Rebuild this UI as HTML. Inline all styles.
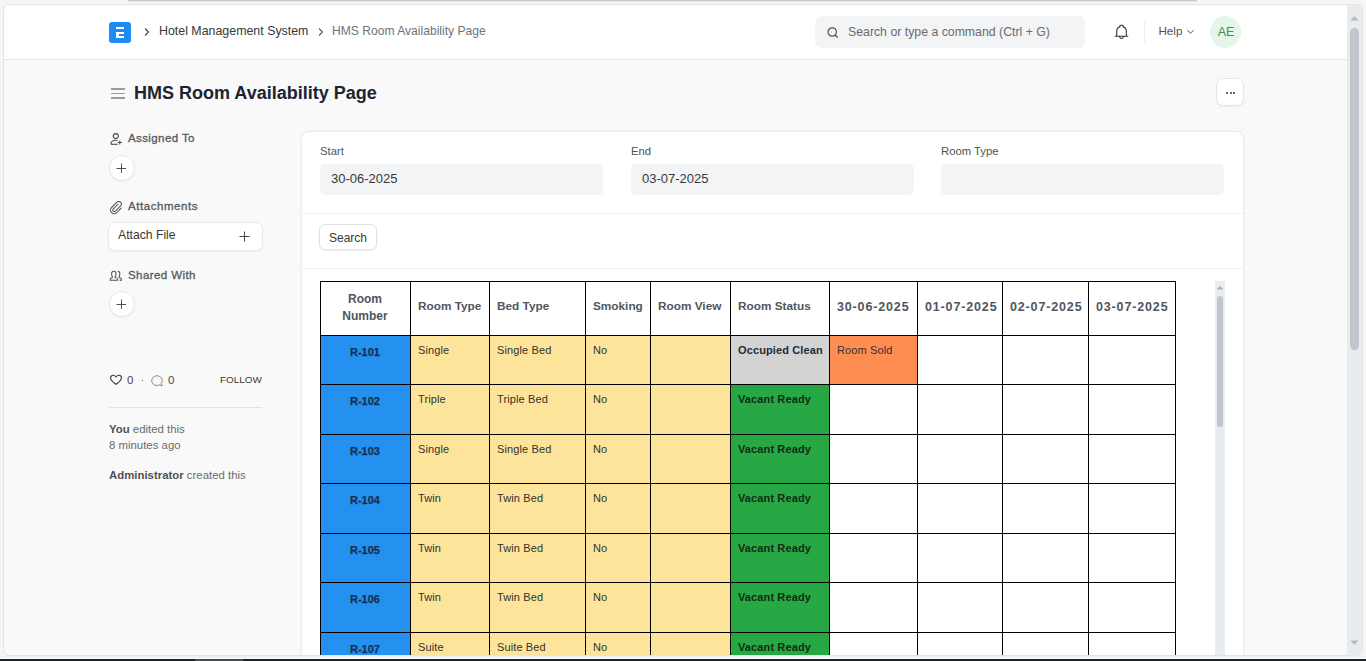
<!DOCTYPE html>
<html><head><meta charset="utf-8">
<style>
*{box-sizing:border-box;margin:0;padding:0}
html,body{width:1366px;height:661px;overflow:hidden;background:#f5f5f5;font-family:"Liberation Sans",sans-serif;color:#383838}
.abs{position:absolute}
#frame{position:absolute;left:3px;top:4px;width:1360px;height:652px;border:1px solid #e4e4e4;border-radius:6px;background:#f9f9f9;overflow:hidden}
#topstrip{position:absolute;left:128px;top:0;width:1069px;height:1px;background:#c8c8c8;box-shadow:0 1px 0 #e6e6e6}
#bottomdark{position:absolute;left:0;top:659px;width:1366px;height:2px;background:#1c2226}
#bottomdark2{position:absolute;left:195px;top:659px;width:48px;height:2px;background:#44494c}
#nav{position:absolute;left:0;top:0;width:1343px;height:55px;background:#fff;border-bottom:1px solid #e3e3e3}
.t{position:absolute;white-space:nowrap;line-height:1}
.c{position:absolute;overflow:hidden}
.vl{position:absolute;width:1px;background:#000}
.hl{position:absolute;height:1px;background:#000}
.hd{position:absolute;left:0;right:0;top:0;bottom:0;display:flex;align-items:center;padding-left:8px;padding-bottom:3px;font-weight:700;font-size:11.8px;color:#4f5660;line-height:17px}
.hc{justify-content:center;text-align:center;padding-left:0;padding-bottom:0;font-size:12px}
.hdate{font-size:12.5px;letter-spacing:0.85px;padding-left:8px;padding-bottom:2px}
.td{position:absolute;left:8px;top:10px;font-size:11px;color:#33322c;line-height:1;white-space:nowrap;letter-spacing:0.12px}
.td.b{font-weight:700}
.occ{color:#1f2a3c}
.vac{color:#0d2e14}
.rn{position:absolute;left:0;right:0;top:12px;text-align:center;font-size:11px;font-weight:700;color:#17304f;line-height:1;-webkit-text-stroke:0.25px #17304f}
</style></head><body>
<div id="topstrip"></div>
<div id="frame">
  <div id="nav"></div>
</div>
<div class="abs" style="left:0;top:656px;width:1366px;height:2px;background:#eff1f1"></div><div class="abs" style="left:0;top:658px;width:1366px;height:1px;background:#fdfdfd"></div><div id="bottomdark"></div><div id="bottomdark2"></div>
<div id="page" style="position:absolute;left:0;top:0;width:1366px;height:655px;overflow:hidden">
  <!-- card -->
  <div class="abs" style="left:301px;top:131px;width:943px;height:600px;background:#fff;border:1px solid #ececec;border-radius:8px;box-shadow:0 0 2.5px rgba(0,0,0,0.05)"></div>
  <div class="abs" style="left:302px;top:213px;width:941px;height:1px;background:#f0f0f0"></div>
  <div class="abs" style="left:302px;top:268px;width:941px;height:1px;background:#f0f0f0"></div>
  <!-- inner scrollbar -->
  <div class="abs" style="left:1215px;top:281px;width:10px;height:380px;background:#e9ecef"></div>
  <div class="abs" style="left:1217px;top:296px;width:6px;height:131px;background:#c1c6cc;border-radius:3px"></div>
  <svg class="abs" style="left:1216px;top:285px" width="8" height="5" viewBox="0 0 8 5"><path d="M0.5 4.5 L4 1 L7.5 4.5 Z" fill="#a8adb3"/></svg>
  <!-- main scrollbar -->
  <div class="abs" style="left:1347px;top:5px;width:15px;height:650px;background:#e9ecef;border-radius:0 5px 5px 0"></div>
  <div class="abs" style="left:1350px;top:28px;width:9px;height:322px;background:#c1c6cc;border-radius:4.5px"></div>
  <svg class="abs" style="left:1350px;top:15px" width="9" height="6" viewBox="0 0 9 6"><path d="M0.5 5.5 L4.5 1 L8.5 5.5 Z" fill="#b4b9be"/></svg>
  <svg class="abs" style="left:1350px;top:640px" width="9" height="6" viewBox="0 0 9 6"><path d="M0.5 0.5 L4.5 5 L8.5 0.5 Z" fill="#b4b9be"/></svg>
  <!-- logo -->
  <div class="abs" style="left:109px;top:22px;width:22px;height:21px;background:#1e8bf5;border-radius:3px"></div>
  <div class="abs" style="left:116px;top:27px;width:8px;height:2px;background:#fff"></div>
  <div class="abs" style="left:116px;top:32px;width:8px;height:6px;border:2px solid #fff;border-right:none;border-left-width:3px"></div>
  <!-- breadcrumb -->
  <svg class="abs" style="left:143px;top:27px" width="8" height="10" viewBox="0 0 8 10"><path d="M2 1.5 L5.5 5 L2 8.5" fill="none" stroke="#454545" stroke-width="1.1"/></svg>
  <div class="t" style="left:159px;top:25px;font-size:12.4px;color:#383838">Hotel Management System</div>
  <svg class="abs" style="left:317px;top:27px" width="8" height="10" viewBox="0 0 8 10"><path d="M2 1.5 L5.5 5 L2 8.5" fill="none" stroke="#5a5a5a" stroke-width="1.1"/></svg>
  <div class="t" style="left:332px;top:25px;font-size:12.1px;color:#6e7378">HMS Room Availability Page</div>
  <!-- search -->
  <div class="abs" style="left:815px;top:16px;width:270px;height:32px;background:#f3f4f6;border-radius:7px"></div>
  <svg class="abs" style="left:827px;top:27px" width="12" height="11" viewBox="0 0 12 11"><circle cx="5.2" cy="5" r="4.2" fill="none" stroke="#525252" stroke-width="1.2"/><path d="M8.2 8.2 L10.8 10.6" stroke="#525252" stroke-width="1.3"/></svg>
  <div class="t" style="left:848px;top:26px;font-size:12.3px;color:#6b6b6b">Search or type a command (Ctrl + G)</div>
  <!-- bell -->
  <svg class="abs" style="left:1112.5px;top:24px" width="17" height="16" viewBox="0 0 17 16"><path d="M2.2 12.2 L14.8 12.2 M3.7 12.2 L3.7 7.3 C3.7 5 5 3.4 6.9 2.9 L6.9 1.9 C6.9 1.5 7.2 1.2 7.6 1.2 L9.4 1.2 C9.8 1.2 10.1 1.5 10.1 1.9 L10.1 2.9 C12 3.4 13.3 5 13.3 7.3 L13.3 12.2 M6.7 12.8 C6.9 13.9 7.6 14.5 8.5 14.5 C9.4 14.5 10.1 13.9 10.3 12.8" fill="none" stroke="#333" stroke-width="1.1" stroke-linejoin="round" stroke-linecap="round"/></svg>
  <div class="abs" style="left:1144px;top:21px;width:1px;height:22px;background:#ececec"></div>
  <div class="t" style="left:1158.5px;top:25.3px;font-size:11.6px;color:#505050">Help</div>
  <svg class="abs" style="left:1186px;top:29px" width="9" height="6" viewBox="0 0 9 6"><path d="M1.4 1.3 L4.5 4.2 L7.6 1.3" fill="none" stroke="#444" stroke-width="0.95"/></svg>
  <div class="abs" style="left:1210px;top:16px;width:31px;height:32px;border-radius:50%;background:#e4f5e9"></div>
  <div class="t" style="left:1210px;top:26px;width:32px;text-align:center;font-size:12.5px;color:#3f8f5c">AE</div>
  <!-- title -->
  <div class="abs" style="left:111px;top:88px;width:14px;height:1.5px;background:#959ca4"></div>
  <div class="abs" style="left:111px;top:92.5px;width:14px;height:1.5px;background:#959ca4"></div>
  <div class="abs" style="left:111px;top:97px;width:14px;height:1.5px;background:#959ca4"></div>
  <div class="t" style="left:134px;top:84px;font-size:18px;font-weight:700;color:#1b2430">HMS Room Availability Page</div>
  <div class="abs" style="left:1216px;top:78px;width:28px;height:28px;background:#fff;border:1px solid #e6e6e6;border-radius:7px;box-shadow:0 1px 2px rgba(0,0,0,0.05)"></div>
  <div class="abs" style="left:1226px;top:92px;width:2px;height:2px;background:#333;border-radius:1px"></div>
  <div class="abs" style="left:1229.5px;top:92px;width:2px;height:2px;background:#333;border-radius:1px"></div>
  <div class="abs" style="left:1233px;top:92px;width:2px;height:2px;background:#333;border-radius:1px"></div>
  <!-- sidebar -->
  <svg class="abs" style="left:110px;top:133px" width="13" height="13" viewBox="0 0 13 13"><circle cx="5.8" cy="3.1" r="2.5" fill="none" stroke="#4a4a4a" stroke-width="1.1"/><path d="M1 11.3 C1 8.6 3.2 7.3 5.8 7.3 C6.4 7.3 7 7.4 7.4 7.5" fill="none" stroke="#4a4a4a" stroke-width="1.1"/><path d="M1 11.3 L7.6 11.3" stroke="#4a4a4a" stroke-width="1.1"/><path d="M9.8 7.4 L9.8 11.6 M7.6 9.5 L12 9.5" stroke="#4a4a4a" stroke-width="1"/></svg>
  <div class="t" style="left:128px;top:133px;font-size:11.5px;font-weight:400;color:#555c64;-webkit-text-stroke:0.32px #555c64;letter-spacing:0.4px">Assigned To</div>
  <div class="abs" style="left:109px;top:155px;width:26px;height:26px;border-radius:50%;background:#fff;border:1px solid #e8e8e8;box-shadow:0 1px 2px rgba(0,0,0,0.06)"></div>
  <svg class="abs" style="left:116px;top:163px" width="11" height="11" viewBox="0 0 11 11"><path d="M5.5 0.5 L5.5 10 M0.5 5.5 L10 5.5" stroke="#4a4a4a" stroke-width="0.95"/></svg>
  <svg class="abs" style="left:110px;top:201px" width="14" height="14" viewBox="0 0 14 14"><g transform="translate(-0.4,0.2)"><path d="M8.5 3 L3.5 8 A1.5 1.5 0 0 0 5.6 10.1 L11 4.7 A2.6 2.6 0 0 0 7.3 1 L2 6.3 A3.6 3.6 0 0 0 7.1 11.4 L11.8 6.7" fill="none" stroke="#5f5f5f" stroke-width="1.1"/></g></svg>
  <div class="t" style="left:128px;top:201px;font-size:11.5px;font-weight:400;color:#555c64;-webkit-text-stroke:0.32px #555c64;letter-spacing:0.55px">Attachments</div>
  <div class="abs" style="left:108px;top:222px;width:155px;height:29px;background:#fff;border:1px solid #e8e8e8;border-radius:7px;box-shadow:0 1px 2px rgba(0,0,0,0.05)"></div>
  <div class="t" style="left:118px;top:229px;font-size:12.2px;color:#383838">Attach File</div>
  <svg class="abs" style="left:239px;top:231px" width="11" height="11" viewBox="0 0 11 11"><path d="M5.5 0.5 L5.5 10.5 M0.5 5.5 L10.5 5.5" stroke="#454545" stroke-width="1"/></svg>
  <svg class="abs" style="left:109px;top:270px" width="14" height="12" viewBox="0 0 14 12"><path d="M3.4 6.6 C2.7 5.8 2.6 4.6 2.6 3.4 C2.6 2.1 3.4 1.3 4.8 1.3 C6.2 1.3 7 2.1 7 3.4 C7 4.6 6.9 5.8 6.2 6.6 L6.2 7.5 C7.8 7.9 8.6 8.5 8.6 9.5 L8.6 10.3 L1.2 10.3 L1.2 9.5 C1.2 8.5 2 7.9 3.4 7.5 Z" fill="none" stroke="#555" stroke-width="1.05" stroke-linejoin="round"/><path d="M8.7 1.3 C10.1 1.3 10.8 2.1 10.8 3.4 C10.8 4.6 10.7 5.8 10 6.6 L10 7.5 C11.6 7.9 12.5 8.5 12.5 9.5 L12.5 10.3 L10.6 10.3" fill="none" stroke="#555" stroke-width="1.05" stroke-linejoin="round"/></svg>
  <div class="t" style="left:128px;top:270px;font-size:11.5px;font-weight:400;color:#555c64;-webkit-text-stroke:0.32px #555c64;letter-spacing:0.42px">Shared With</div>
  <div class="abs" style="left:109px;top:291px;width:26px;height:26px;border-radius:50%;background:#fff;border:1px solid #e8e8e8;box-shadow:0 1px 2px rgba(0,0,0,0.06)"></div>
  <svg class="abs" style="left:116px;top:299px" width="11" height="11" viewBox="0 0 11 11"><path d="M5.5 0.5 L5.5 10 M0.5 5.5 L10 5.5" stroke="#4a4a4a" stroke-width="0.95"/></svg>
  <!-- likes -->
  <svg class="abs" style="left:109px;top:374px" width="14" height="12" viewBox="0 0 14 12"><path d="M7 10.4 C5 8.7 1.6 6.5 1.6 3.9 C1.6 2.3 2.7 1.3 4.1 1.3 C5.3 1.3 6.3 2 7 3 C7.7 2 8.7 1.3 9.9 1.3 C11.3 1.3 12.4 2.3 12.4 3.9 C12.4 6.5 9 8.7 7 10.4 Z" fill="none" stroke="#3a3a3a" stroke-width="1.1" stroke-linejoin="round"/></svg>
  <div class="t" style="left:127px;top:375px;font-size:11.5px;color:#4a4a4a">0</div>
  <div class="abs" style="left:141.5px;top:380px;width:1.3px;height:1.3px;background:#666"></div>
  <svg class="abs" style="left:150px;top:374px" width="14" height="13" viewBox="0 0 14 13"><path d="M11.2 9.6 A5.3 4.9 0 1 0 9.6 10.9 L12.3 11.9 Z" fill="none" stroke="#8a8a8a" stroke-width="1" stroke-linejoin="round"/></svg>
  <div class="t" style="left:168px;top:375px;font-size:11.5px;color:#4a4a4a">0</div>
  <div class="t" style="left:220px;top:375px;font-size:9.9px;color:#383838">FOLLOW</div>
  <div class="abs" style="left:109px;top:407px;width:153px;height:1px;background:#e2e2e2"></div>
  <div class="t" style="left:109px;top:424px;font-size:11.4px;color:#6b6b6b"><b style="color:#525252">You</b> edited this</div>
  <div class="t" style="left:109px;top:440px;font-size:11.4px;color:#6b6b6b">8 minutes ago</div>
  <div class="t" style="left:109px;top:470px;font-size:11.4px;color:#6b6b6b"><b style="color:#525252">Administrator</b> created this</div>
  <!-- form fields -->
  <div class="t" style="left:320px;top:146px;font-size:11.3px;color:#525252">Start</div>
  <div class="abs" style="left:320px;top:164px;width:283px;height:31px;background:#f3f4f6;border-radius:5px"></div>
  <div class="t" style="left:331px;top:172px;font-size:13px;color:#383838">30-06-2025</div>
  <div class="t" style="left:631px;top:146px;font-size:11.3px;color:#525252">End</div>
  <div class="abs" style="left:631px;top:164px;width:283px;height:31px;background:#f3f4f6;border-radius:5px"></div>
  <div class="t" style="left:642px;top:172px;font-size:13px;color:#383838">03-07-2025</div>
  <div class="t" style="left:941px;top:146px;font-size:11.3px;color:#525252">Room Type</div>
  <div class="abs" style="left:941px;top:164px;width:283px;height:31px;background:#f3f4f6;border-radius:5px"></div>
  <div class="abs" style="left:319px;top:224px;width:58px;height:26px;background:#fff;border:1px solid #e2e2e2;border-radius:6px;box-shadow:0 1px 2px rgba(0,0,0,0.06)"></div>
  <div class="t" style="left:329px;top:232px;font-size:12px;color:#383838">Search</div>

<div class="c" style="left:320px;top:281px;width:90px;height:54px;background:#fff"><div class="hd hc">Room<br>Number</div></div>
<div class="c" style="left:410px;top:281px;width:79px;height:54px;background:#fff"><div class="hd">Room Type</div></div>
<div class="c" style="left:489px;top:281px;width:96px;height:54px;background:#fff"><div class="hd">Bed Type</div></div>
<div class="c" style="left:585px;top:281px;width:65px;height:54px;background:#fff"><div class="hd">Smoking</div></div>
<div class="c" style="left:650px;top:281px;width:80px;height:54px;background:#fff"><div class="hd">Room View</div></div>
<div class="c" style="left:730px;top:281px;width:99px;height:54px;background:#fff"><div class="hd">Room Status</div></div>
<div class="c" style="left:829px;top:281px;width:88px;height:54px;background:#fff"><div class="hd hdate">30-06-2025</div></div>
<div class="c" style="left:917px;top:281px;width:85px;height:54px;background:#fff"><div class="hd hdate">01-07-2025</div></div>
<div class="c" style="left:1002px;top:281px;width:86px;height:54px;background:#fff"><div class="hd hdate">02-07-2025</div></div>
<div class="c" style="left:1088px;top:281px;width:87px;height:54px;background:#fff"><div class="hd hdate">03-07-2025</div></div>
<div class="c" style="left:320px;top:335px;width:90px;height:49px;background:#2490ef"><div class="rn">R-101</div></div>
<div class="c" style="left:410px;top:335px;width:79px;height:49px;background:#fde49b"><div class="td">Single</div></div>
<div class="c" style="left:489px;top:335px;width:96px;height:49px;background:#fde49b"><div class="td">Single Bed</div></div>
<div class="c" style="left:585px;top:335px;width:65px;height:49px;background:#fde49b"><div class="td">No</div></div>
<div class="c" style="left:650px;top:335px;width:80px;height:49px;background:#fde49b"><div class="td"></div></div>
<div class="c" style="left:730px;top:335px;width:99px;height:49px;background:#d3d3d3"><div class="td b occ">Occupied Clean</div></div>
<div class="c" style="left:829px;top:335px;width:88px;height:49px;background:#fd8d50"><div class="td">Room Sold</div></div>
<div class="c" style="left:917px;top:335px;width:85px;height:49px;background:#fff"></div>
<div class="c" style="left:1002px;top:335px;width:86px;height:49px;background:#fff"></div>
<div class="c" style="left:1088px;top:335px;width:87px;height:49px;background:#fff"></div>
<div class="c" style="left:320px;top:384px;width:90px;height:50px;background:#2490ef"><div class="rn">R-102</div></div>
<div class="c" style="left:410px;top:384px;width:79px;height:50px;background:#fde49b"><div class="td">Triple</div></div>
<div class="c" style="left:489px;top:384px;width:96px;height:50px;background:#fde49b"><div class="td">Triple Bed</div></div>
<div class="c" style="left:585px;top:384px;width:65px;height:50px;background:#fde49b"><div class="td">No</div></div>
<div class="c" style="left:650px;top:384px;width:80px;height:50px;background:#fde49b"><div class="td"></div></div>
<div class="c" style="left:730px;top:384px;width:99px;height:50px;background:#28a745"><div class="td b vac">Vacant Ready</div></div>
<div class="c" style="left:829px;top:384px;width:88px;height:50px;background:#fff"></div>
<div class="c" style="left:917px;top:384px;width:85px;height:50px;background:#fff"></div>
<div class="c" style="left:1002px;top:384px;width:86px;height:50px;background:#fff"></div>
<div class="c" style="left:1088px;top:384px;width:87px;height:50px;background:#fff"></div>
<div class="c" style="left:320px;top:434px;width:90px;height:49px;background:#2490ef"><div class="rn">R-103</div></div>
<div class="c" style="left:410px;top:434px;width:79px;height:49px;background:#fde49b"><div class="td">Single</div></div>
<div class="c" style="left:489px;top:434px;width:96px;height:49px;background:#fde49b"><div class="td">Single Bed</div></div>
<div class="c" style="left:585px;top:434px;width:65px;height:49px;background:#fde49b"><div class="td">No</div></div>
<div class="c" style="left:650px;top:434px;width:80px;height:49px;background:#fde49b"><div class="td"></div></div>
<div class="c" style="left:730px;top:434px;width:99px;height:49px;background:#28a745"><div class="td b vac">Vacant Ready</div></div>
<div class="c" style="left:829px;top:434px;width:88px;height:49px;background:#fff"></div>
<div class="c" style="left:917px;top:434px;width:85px;height:49px;background:#fff"></div>
<div class="c" style="left:1002px;top:434px;width:86px;height:49px;background:#fff"></div>
<div class="c" style="left:1088px;top:434px;width:87px;height:49px;background:#fff"></div>
<div class="c" style="left:320px;top:483px;width:90px;height:50px;background:#2490ef"><div class="rn">R-104</div></div>
<div class="c" style="left:410px;top:483px;width:79px;height:50px;background:#fde49b"><div class="td">Twin</div></div>
<div class="c" style="left:489px;top:483px;width:96px;height:50px;background:#fde49b"><div class="td">Twin Bed</div></div>
<div class="c" style="left:585px;top:483px;width:65px;height:50px;background:#fde49b"><div class="td">No</div></div>
<div class="c" style="left:650px;top:483px;width:80px;height:50px;background:#fde49b"><div class="td"></div></div>
<div class="c" style="left:730px;top:483px;width:99px;height:50px;background:#28a745"><div class="td b vac">Vacant Ready</div></div>
<div class="c" style="left:829px;top:483px;width:88px;height:50px;background:#fff"></div>
<div class="c" style="left:917px;top:483px;width:85px;height:50px;background:#fff"></div>
<div class="c" style="left:1002px;top:483px;width:86px;height:50px;background:#fff"></div>
<div class="c" style="left:1088px;top:483px;width:87px;height:50px;background:#fff"></div>
<div class="c" style="left:320px;top:533px;width:90px;height:49px;background:#2490ef"><div class="rn">R-105</div></div>
<div class="c" style="left:410px;top:533px;width:79px;height:49px;background:#fde49b"><div class="td">Twin</div></div>
<div class="c" style="left:489px;top:533px;width:96px;height:49px;background:#fde49b"><div class="td">Twin Bed</div></div>
<div class="c" style="left:585px;top:533px;width:65px;height:49px;background:#fde49b"><div class="td">No</div></div>
<div class="c" style="left:650px;top:533px;width:80px;height:49px;background:#fde49b"><div class="td"></div></div>
<div class="c" style="left:730px;top:533px;width:99px;height:49px;background:#28a745"><div class="td b vac">Vacant Ready</div></div>
<div class="c" style="left:829px;top:533px;width:88px;height:49px;background:#fff"></div>
<div class="c" style="left:917px;top:533px;width:85px;height:49px;background:#fff"></div>
<div class="c" style="left:1002px;top:533px;width:86px;height:49px;background:#fff"></div>
<div class="c" style="left:1088px;top:533px;width:87px;height:49px;background:#fff"></div>
<div class="c" style="left:320px;top:582px;width:90px;height:50px;background:#2490ef"><div class="rn">R-106</div></div>
<div class="c" style="left:410px;top:582px;width:79px;height:50px;background:#fde49b"><div class="td">Twin</div></div>
<div class="c" style="left:489px;top:582px;width:96px;height:50px;background:#fde49b"><div class="td">Twin Bed</div></div>
<div class="c" style="left:585px;top:582px;width:65px;height:50px;background:#fde49b"><div class="td">No</div></div>
<div class="c" style="left:650px;top:582px;width:80px;height:50px;background:#fde49b"><div class="td"></div></div>
<div class="c" style="left:730px;top:582px;width:99px;height:50px;background:#28a745"><div class="td b vac">Vacant Ready</div></div>
<div class="c" style="left:829px;top:582px;width:88px;height:50px;background:#fff"></div>
<div class="c" style="left:917px;top:582px;width:85px;height:50px;background:#fff"></div>
<div class="c" style="left:1002px;top:582px;width:86px;height:50px;background:#fff"></div>
<div class="c" style="left:1088px;top:582px;width:87px;height:50px;background:#fff"></div>
<div class="c" style="left:320px;top:632px;width:90px;height:49px;background:#2490ef"><div class="rn">R-107</div></div>
<div class="c" style="left:410px;top:632px;width:79px;height:49px;background:#fde49b"><div class="td">Suite</div></div>
<div class="c" style="left:489px;top:632px;width:96px;height:49px;background:#fde49b"><div class="td">Suite Bed</div></div>
<div class="c" style="left:585px;top:632px;width:65px;height:49px;background:#fde49b"><div class="td">No</div></div>
<div class="c" style="left:650px;top:632px;width:80px;height:49px;background:#fde49b"><div class="td"></div></div>
<div class="c" style="left:730px;top:632px;width:99px;height:49px;background:#28a745"><div class="td b vac">Vacant Ready</div></div>
<div class="c" style="left:829px;top:632px;width:88px;height:49px;background:#fff"></div>
<div class="c" style="left:917px;top:632px;width:85px;height:49px;background:#fff"></div>
<div class="c" style="left:1002px;top:632px;width:86px;height:49px;background:#fff"></div>
<div class="c" style="left:1088px;top:632px;width:87px;height:49px;background:#fff"></div>
<div class="vl" style="left:320px;top:281px;height:419px"></div>
<div class="vl" style="left:410px;top:281px;height:419px"></div>
<div class="vl" style="left:489px;top:281px;height:419px"></div>
<div class="vl" style="left:585px;top:281px;height:419px"></div>
<div class="vl" style="left:650px;top:281px;height:419px"></div>
<div class="vl" style="left:730px;top:281px;height:419px"></div>
<div class="vl" style="left:829px;top:281px;height:419px"></div>
<div class="vl" style="left:917px;top:281px;height:419px"></div>
<div class="vl" style="left:1002px;top:281px;height:419px"></div>
<div class="vl" style="left:1088px;top:281px;height:419px"></div>
<div class="vl" style="left:1175px;top:281px;height:419px"></div>
<div class="hl" style="left:320px;top:281px;width:856px"></div>
<div class="hl" style="left:320px;top:335px;width:856px"></div>
<div class="hl" style="left:320px;top:384px;width:856px"></div>
<div class="hl" style="left:320px;top:434px;width:856px"></div>
<div class="hl" style="left:320px;top:483px;width:856px"></div>
<div class="hl" style="left:320px;top:533px;width:856px"></div>
<div class="hl" style="left:320px;top:582px;width:856px"></div>
<div class="hl" style="left:320px;top:632px;width:856px"></div>
<div class="hl" style="left:320px;top:681px;width:856px"></div>
</div>
</body></html>
